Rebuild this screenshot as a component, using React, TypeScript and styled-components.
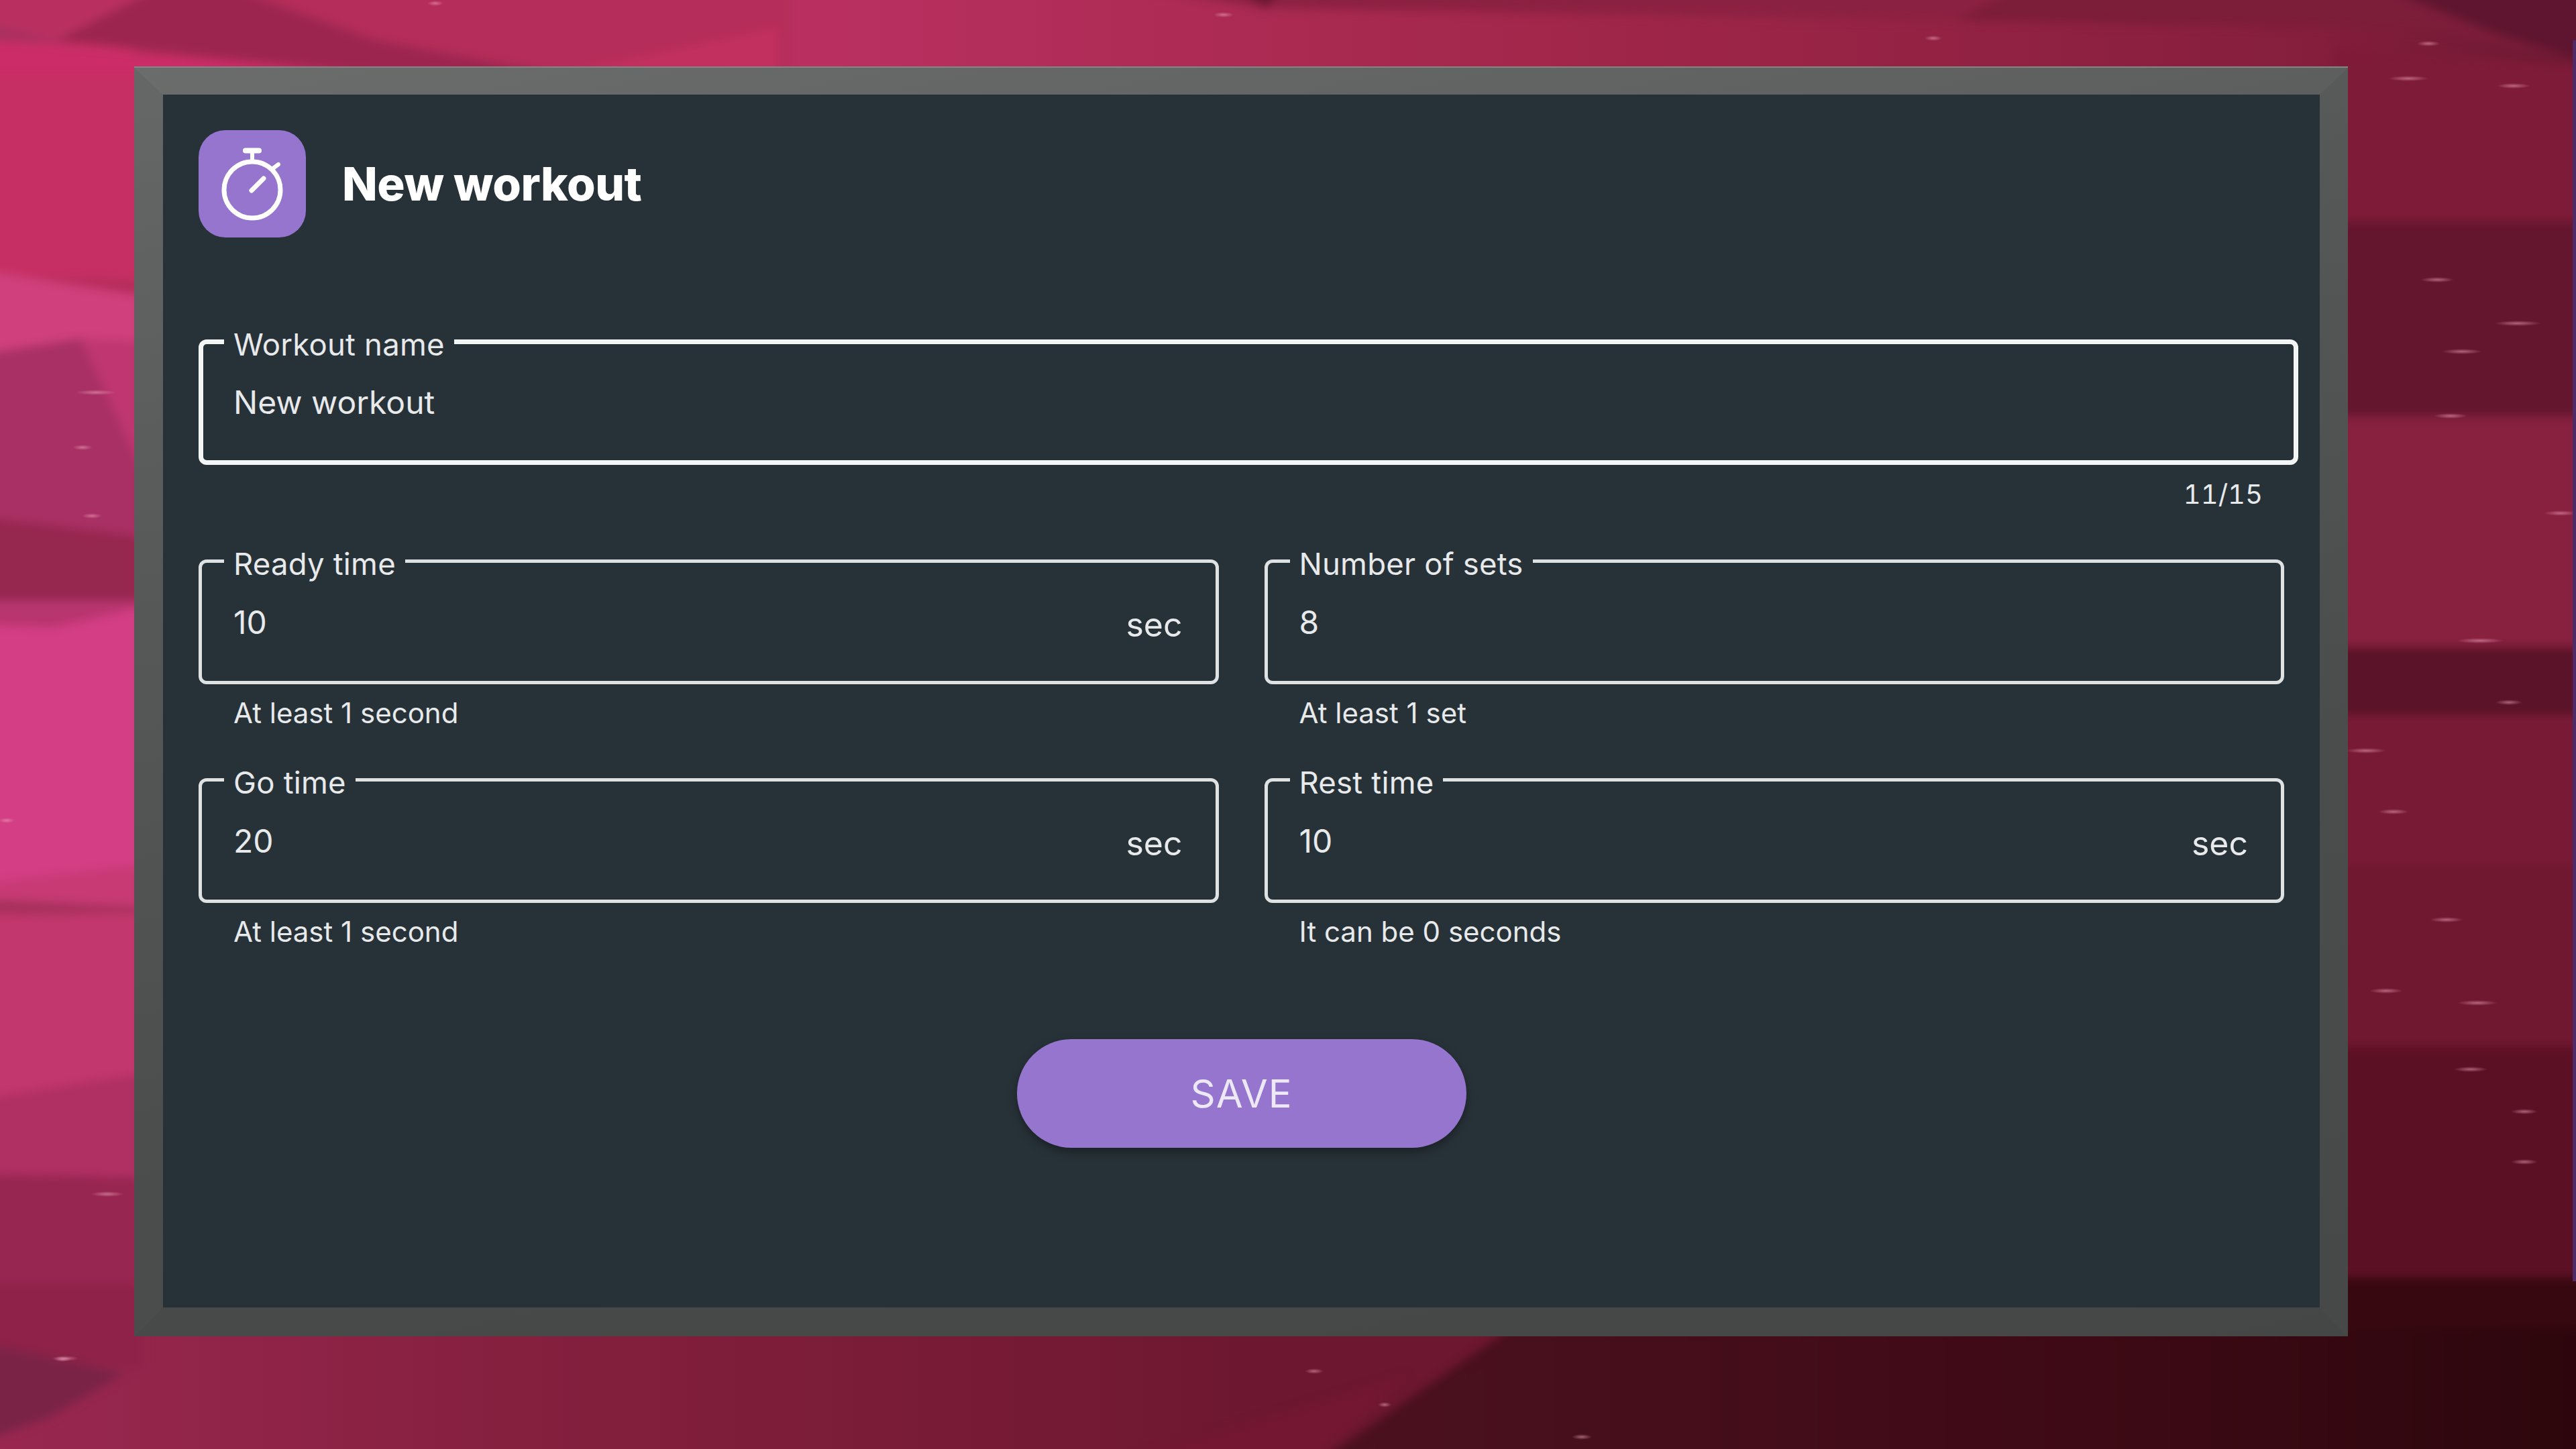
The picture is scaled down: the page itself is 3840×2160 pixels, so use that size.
import React from "react";
import styled, { createGlobalStyle } from "styled-components";

const Global = createGlobalStyle`
  html, body { margin: 0; padding: 0; background: #7e1b38; }
  * { box-sizing: border-box; }
`;

const Page = styled.div`
  position: relative;
  width: 3840px;
  height: 2160px;
  overflow: hidden;
  padding: 101px 0 0 200px;
  font-family: Inter, "Noto Sans", sans-serif;
  color: #e7e9ea;
`;

const Wallpaper = styled.svg`
  position: absolute;
  inset: 0;
  width: 3840px;
  height: 2160px;
`;

const Panel = styled.main`
  position: relative;
  width: 3300px;
  height: 1891px;
  border-style: solid;
  border-width: 40px 42px 43px 43px;
  border-color: rgba(255, 255, 255, 0.03) transparent rgba(0, 0, 0, 0.02) transparent;
  background: linear-gradient(#273238, #273238) padding-box,
    linear-gradient(168deg, #656867 0%, #565958 30%, #4b4d4d 65%, #474949 100%) border-box;
  box-shadow: 0 -2px 0 #838685;
  padding: 52px 0 0 53px;
  display: flex;
  flex-direction: column;
`;

const Header = styled.header`
  display: flex;
  align-items: center;
  gap: 54px;
  height: 161px;
  margin-bottom: 152px;
`;

const IconBox = styled.div`
  width: 160px;
  height: 160px;
  border-radius: 40px;
  background: #9575cd;
  flex: none;
`;

const Title = styled.h1`
  margin: 0;
  font-size: 69px;
  font-weight: 800;
  letter-spacing: -0.5px;
  color: #ffffff;
`;

const Outline = styled.fieldset<{ $strong?: boolean }>`
  margin: 0;
  min-width: 0;
  height: ${(p) => (p.$strong ? "187px" : "186px")};
  border: ${(p) => (p.$strong ? "7px solid #f4f5f5" : "5px solid #dfe2e3")};
  border-radius: 12px;
  padding: ${(p) => (p.$strong ? "0 50px 0 45px" : "0 49px 0 47px")};
  display: flex;
  align-items: center;
  justify-content: space-between;
`;

const Legend = styled.legend`
  height: 5px;
  line-height: 14px;
  margin-left: -14px;
  padding: 0 14px;
  font-size: 45.5px;
  letter-spacing: 0.2px;
  white-space: nowrap;
  color: #e7e9ea;
`;

const Value = styled.span`
  font-size: 48px;
`;

const Unit = styled.span`
  font-size: 50px;
  padding-top: 8px;
`;

const NameField = styled.div`
  width: 3130px;
`;

const Counter = styled.div`
  height: 141px;
  padding: 22px 53px 0 0;
  text-align: right;
  font-size: 40px;
  line-height: 44px;
  font-variant-numeric: tabular-nums;
`;

const FieldGrid = styled.div`
  width: 3109px;
  display: grid;
  grid-template-columns: 1fr 1fr;
  column-gap: 68px;
  row-gap: 0;
`;

const FieldCell = styled.div`
  height: 326px;
`;

const Hint = styled.div`
  padding: 21px 0 0 52px;
  font-size: 42px;
  line-height: 44px;
`;

const Actions = styled.div`
  width: 3109px;
  margin-top: 63px;
  display: flex;
  justify-content: center;
`;

const SaveButton = styled.button`
  width: 670px;
  height: 162px;
  border: 0;
  border-radius: 81px;
  background: #9575cd;
  color: #ece8f5;
  font-family: inherit;
  font-size: 58px;
  font-weight: 400;
  letter-spacing: 1px;
  box-shadow: 0 6px 14px rgba(0, 0, 0, 0.35);
`;

const StopwatchIcon = () => (
  <svg width="160" height="160" viewBox="0 0 160 160" fill="none" stroke="#fff" strokeLinecap="round">
    <circle cx="80" cy="89" r="42" strokeWidth="7" />
    <path d="M70 30.5H90" strokeWidth="8" />
    <path d="M80 34V46" strokeWidth="6" />
    <path d="M111 57L119 51" strokeWidth="6" />
    <path d="M79 90L97 72" strokeWidth="7" />
  </svg>
);

const bands: [string, string][] = [
  // left strip
  ["-40,-40 300,-40 300,70 -40,60", "#a93060"],
  ["-40,60 300,70 300,420 -40,410", "#c62f63"],
  ["-40,400 210,440 210,510 -40,530", "#cf407c"],
  ["-40,530 120,505 210,510 210,800 -40,770", "#a83064"],
  ["120,505 210,510 210,700", "#bf3670"],
  ["-40,770 210,800 210,895 -40,895", "#96274f"],
  ["-40,895 210,895 210,905 80,935 -40,930", "#b8356f"],
  ["-40,930 80,935 210,905 210,1290 -40,1320", "#d33e84"],
  ["-40,1320 210,1290 210,1360 -40,1365", "#c73a74"],
  ["-40,1340 210,1352 210,1364 -40,1362", "#a5305a"],
  ["-40,1365 210,1360 210,1600 -40,1640", "#c2376d"],
  ["-40,1640 210,1600 210,1755 -40,1750", "#b03064"],
  ["-40,1750 210,1755 210,1915 -40,1915", "#972650"],
  ["-40,1915 210,1915 210,2040 -40,2020", "#8e2248"],
  // top strip
  ["200,-40 1175,-40 1175,110 200,110", "#b52d5a"],
  ["-40,-40 280,-40 85,60 -40,30", "#b93060"],
  ["280,-40 85,60 560,110 830,110 560,60", "#9c2550"],
  ["-40,62 560,110 -40,110", "#cc2c68"],
  ["830,110 1160,40 1160,110", "#c2305f"],
  ["1567,-40 1885,12 2914,30 3060,-40", "#8b2142"],
  ["1824,-40 1885,12 1935,-40", "#6a1733"],
  ["3060,-40 2914,30 3625,43 3880,97 3880,-40", "#7c1d3a"],
  ["3500,-40 3880,-40 3880,100 3720,50", "#5f152f"],
  // right strip
  ["3480,70 3880,100 3880,330 3480,330", "#7e1b38"],
  ["3480,330 3880,330 3880,620 3480,620", "#64162f"],
  ["3480,620 3880,620 3880,965 3480,965", "#882040"],
  ["3480,965 3880,965 3880,1065 3480,1065", "#5a1328"],
  ["3480,1065 3880,1065 3880,1290 3480,1290", "#781a36"],
  ["3480,1290 3880,1290 3880,1560 3480,1560", "#701830"],
  ["3480,1560 3880,1560 3880,1905 3480,1905", "#5c1024"],
  ["3480,1905 3880,1905 3880,1985 3480,1985", "#37080f"],
  // bottom strip
  ["-40,2000 184,2047 73,2113 -40,2153", "#7a2347"],
  ["1600,2200 1935,2200 2100,2050", "#731733"],
  ["2253,1980 1935,2200 3880,2200 3880,1980", "url(#deep)"],
];

const sparkles: [number, number, number][] = [
  [649, 5, 24], [1824, 22, 30], [2882, 57, 26], [3620, 65, 34], [3590, 117, 60], [3747, 128, 50],
  [3633, 417, 50], [3753, 482, 70], [3670, 524, 60], [3653, 620, 50], [3817, 765, 50], [3697, 955, 70],
  [3527, 1119, 60], [3568, 1210, 45], [3647, 1371, 50], [3557, 1477, 50], [3693, 1495, 60], [3683, 1594, 50],
  [3763, 1657, 40], [3763, 1732, 40], [3740, 1047, 40], [143, 585, 60], [123, 667, 30], [10, 1223, 24],
  [160, 1780, 50], [97, 2025, 40], [137, 769, 30], [93, 2026, 24], [1959, 2044, 28], [2064, 2094, 20], [2358, 2142, 30],
];

const Background = () => (
  <Wallpaper viewBox="0 0 3840 2160" aria-hidden="true">
    <defs>
      <linearGradient id="base" x1="0" x2="1" y1="0" y2="0">
        <stop offset="0" stopColor="#b52d5a" />
        <stop offset="0.32" stopColor="#b93060" />
        <stop offset="0.62" stopColor="#a02649" />
        <stop offset="0.9" stopColor="#851e3d" />
        <stop offset="1" stopColor="#6c1933" />
      </linearGradient>
      <linearGradient id="foot" x1="0" x2="1" y1="0" y2="0">
        <stop offset="0" stopColor="#992750" />
        <stop offset="0.2" stopColor="#85203f" />
        <stop offset="0.5" stopColor="#6d1730" />
      </linearGradient>
      <linearGradient id="deep" x1="0" x2="1" y1="0" y2="0">
        <stop offset="0" stopColor="#4c111f" />
        <stop offset="0.6" stopColor="#3e0a15" />
        <stop offset="1" stopColor="#2c060c" />
      </linearGradient>
      <radialGradient id="spark">
        <stop offset="0" stopColor="#f0a5bd" stopOpacity="0.55" />
        <stop offset="1" stopColor="#f0a5bd" stopOpacity="0" />
      </radialGradient>
      <filter id="soft" x="-5%" y="-5%" width="110%" height="110%" colorInterpolationFilters="sRGB">
        <feGaussianBlur stdDeviation="7" />
      </filter>
    </defs>
    <rect width="3840" height="2160" fill="url(#base)" />
    <rect y="1960" width="3840" height="200" fill="url(#foot)" />
    <g filter="url(#soft)">
      {bands.map(([points, fill]) => (
        <polygon key={points} points={points} fill={fill} />
      ))}
    </g>
    {sparkles.map(([x, y, w]) => (
      <ellipse key={`${x}-${y}`} cx={x} cy={y} rx={w / 2} ry={4} fill="url(#spark)" />
    ))}
    <rect x="3835" y="60" width="5" height="1850" fill="#4e2a66" />
  </Wallpaper>
);

type FieldProps = { label: string; value: string; hint: string; unit?: string };

const NumberField = ({ label, value, hint, unit }: FieldProps) => (
  <FieldCell>
    <Outline>
      <Legend>{label}</Legend>
      <Value>{value}</Value>
      {unit && <Unit>{unit}</Unit>}
    </Outline>
    <Hint>{hint}</Hint>
  </FieldCell>
);

export default function App() {
  return (
    <Page>
      <Global />
      <Background />
      <Panel>
        <Header>
          <IconBox>
            <StopwatchIcon />
          </IconBox>
          <Title>New workout</Title>
        </Header>
        <NameField>
          <Outline $strong>
            <Legend>Workout name</Legend>
            <Value>New workout</Value>
          </Outline>
          <Counter>11/15</Counter>
        </NameField>
        <FieldGrid>
          <NumberField label="Ready time" value="10" unit="sec" hint="At least 1 second" />
          <NumberField label="Number of sets" value="8" hint="At least 1 set" />
          <NumberField label="Go time" value="20" unit="sec" hint="At least 1 second" />
          <NumberField label="Rest time" value="10" unit="sec" hint="It can be 0 seconds" />
        </FieldGrid>
        <Actions>
          <SaveButton>SAVE</SaveButton>
        </Actions>
      </Panel>
    </Page>
  );
}
